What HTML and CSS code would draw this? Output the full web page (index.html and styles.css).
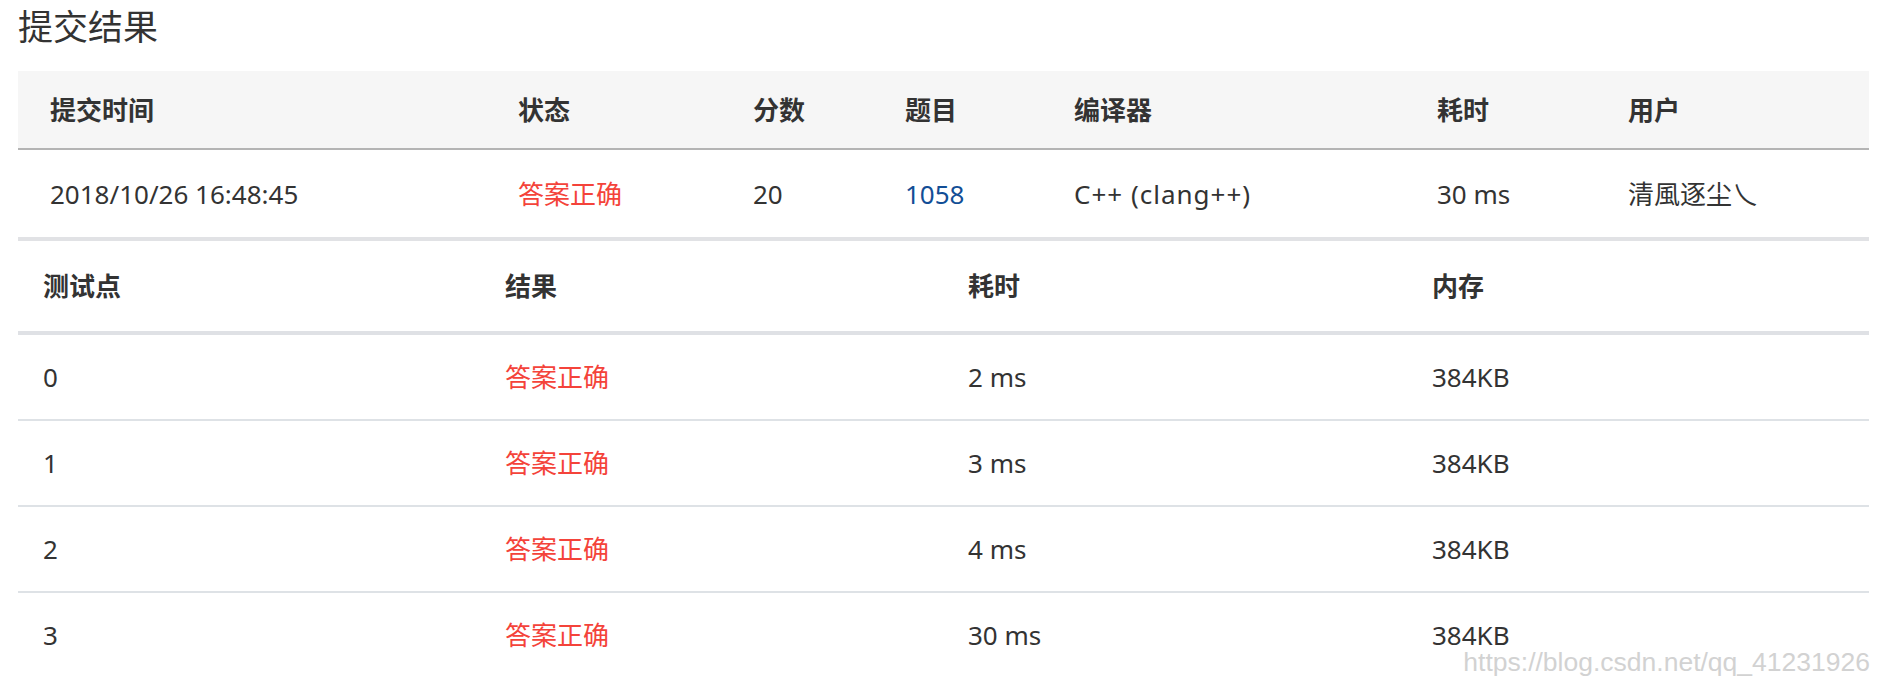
FILE: index.html
```html
<!DOCTYPE html>
<html lang="zh-CN">
<head>
<meta charset="utf-8">
<title>提交结果</title>
<link rel="stylesheet" href="styles.css">
</head>
<body>
<div class="page">
  <h1 class="title">提交结果</h1>
  <table class="submit-table">
    <colgroup>
      <col class="c1"><col class="c2"><col class="c3"><col class="c4"><col class="c5"><col class="c6"><col class="c7">
    </colgroup>
    <thead>
      <tr><th>提交时间</th><th>状态</th><th>分数</th><th>题目</th><th>编译器</th><th>耗时</th><th>用户</th></tr>
    </thead>
    <tbody>
      <tr>
        <td>2018/10/26 16:48:45</td>
        <td class="ok">答案正确</td>
        <td>20</td>
        <td><a class="link" href="#">1058</a></td>
        <td class="compiler">C++ (clang++)</td>
        <td>30 ms</td>
        <td>清風逐尘乀</td>
      </tr>
    </tbody>
  </table>
  <table class="case-table">
    <colgroup>
      <col class="d1"><col class="d2"><col class="d3"><col class="d4">
    </colgroup>
    <thead>
      <tr><th>测试点</th><th>结果</th><th>耗时</th><th>内存</th></tr>
    </thead>
    <tbody>
      <tr><td>0</td><td class="ok">答案正确</td><td>2 ms</td><td>384KB</td></tr>
      <tr><td>1</td><td class="ok">答案正确</td><td>3 ms</td><td>384KB</td></tr>
      <tr><td>2</td><td class="ok">答案正确</td><td>4 ms</td><td>384KB</td></tr>
      <tr><td>3</td><td class="ok">答案正确</td><td>30 ms</td><td>384KB</td></tr>
    </tbody>
  </table>
  <div class="watermark">https://blog.csdn.net/qq_41231926</div>
</div>
</body>
</html>
```

FILE: styles.css
```css
html, body {
  margin: 0;
  padding: 0;
  background: #ffffff;
}

.page {
  position: relative;
  padding-left: 18px;
  font-family: "Noto Sans", "Noto Sans CJK SC", sans-serif;
  color: #333333;
  font-size: 26px;
}

.title {
  margin: 0 0 24px 0;
  padding-top: 7px;
  font-size: 35px;
  line-height: 40px;
  font-weight: normal;
  color: #333333;
}

table {
  border-collapse: separate;
  border-spacing: 0;
  table-layout: fixed;
  width: 1851px;
}

th, td {
  text-align: left;
  white-space: nowrap;
  line-height: 30px;
  vertical-align: middle;
}

th {
  font-weight: bold;
  color: #333333;
}

/* submission summary */
.submit-table .c1 { width: 468px; }
.submit-table .c2 { width: 235px; }
.submit-table .c3 { width: 152px; }
.submit-table .c4 { width: 169px; }
.submit-table .c5 { width: 363px; }
.submit-table .c6 { width: 191px; }
.submit-table .c7 { width: 273px; }

.submit-table th {
  background: #f6f6f6;
  padding: 24px 0 23px 32px;
  border-bottom: 2px solid #b4b4b4;
}

.submit-table td {
  padding: 29px 0 28px 32px;
  border-bottom: 4px solid #e1e2e5;
}

.compiler {
  letter-spacing: 1px;
}

/* test cases */
.case-table .d1 { width: 462px; }
.case-table .d2 { width: 463px; }
.case-table .d3 { width: 464px; }
.case-table .d4 { width: 462px; }

.case-table th {
  padding: 30px 0 30px 25px;
  border-bottom: 4px solid #dfe1e5;
}

.case-table td {
  padding: 27px 0 27px 25px;
  border-bottom: 2px solid #dee2e6;
}

.case-table tbody tr:last-child td {
  border-bottom: none;
}

.ok {
  color: #f4433a;
}

.link {
  color: #124e96;
  text-decoration: none;
}

.watermark {
  position: absolute;
  top: 649px;
  right: 11px;
  font-family: "Liberation Sans", Arial, sans-serif;
  font-size: 26.5px;
  line-height: 1;
  color: #d2d2d2;
  white-space: nowrap;
}
```
